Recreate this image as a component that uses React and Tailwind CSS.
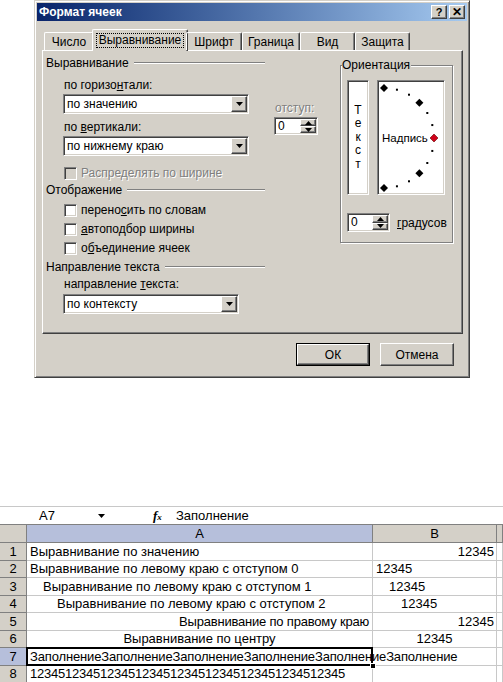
import React from 'react';

const raised =
  'border border-t-white border-l-white border-r-[#404040] border-b-[#404040] shadow-[inset_-1px_-1px_0_#808080] bg-[#d4d0c8]';
const sunken =
  'border border-t-[#808080] border-l-[#808080] border-r-white border-b-white shadow-[inset_1px_1px_0_#404040,inset_-1px_-1px_0_#d4d0c8]';
const dim = 'text-[#808080] [text-shadow:1px_1px_0_#fff]';

function Tri({ up }) {
  return (
    <svg width="7" height="4" viewBox="0 0 7 4">
      <path d={up ? 'M3.5 0L7 4H0z' : 'M0 0h7L3.5 4z'} fill="#000" />
    </svg>
  );
}

function Combo({ value, className }) {
  return (
    <div className={`${sunken} bg-white h-[20px] p-[1px] flex items-center ${className}`}>
      <span className="flex-1 pl-[2px] leading-[16px]">{value}</span>
      <div className={`${raised} w-[16px] h-[16px] flex items-center justify-center`}>
        <Tri />
      </div>
    </div>
  );
}

function Spin({ className }) {
  return (
    <div className={`${sunken} bg-white p-[1px] flex items-stretch ${className}`}>
      <span className="flex-1 pl-[2px] leading-[15px]">0</span>
      <div className="flex flex-col w-[16px]">
        <div className={`${raised} flex-1 flex items-center justify-center`}>
          <Tri up />
        </div>
        <div className={`${raised} flex-1 flex items-center justify-center`}>
          <Tri />
        </div>
      </div>
    </div>
  );
}

function Check({ children, disabled, className = '' }) {
  return (
    <div className={`flex items-center h-[14px] pl-[18px] ${className}`}>
      <div className={`${sunken} w-[13px] h-[13px] ${disabled ? 'bg-[#d4d0c8]' : 'bg-white'}`} />
      <span className={`ml-[4px] leading-[14px] ${disabled ? dim : ''}`}>{children}</span>
    </div>
  );
}

function Header({ children, className = '' }) {
  return (
    <div className={`flex items-center h-[14px] w-[219px] ${className}`}>
      <span className="leading-[14px]">{children}</span>
      <div className="flex-1 ml-[5px] h-[2px] border-t border-t-[#808080] border-b border-b-white" />
    </div>
  );
}

function Tab({ children, className = '' }) {
  return (
    <div
      className={`h-[18px] flex items-center justify-center border-l border-t border-l-white border-t-white border-r border-r-[#404040] shadow-[inset_-1px_0_0_#808080] rounded-t-[2px] ${className}`}
    >
      {children}
    </div>
  );
}

function Dial() {
  const cx = 5;
  const cy = 56;
  const r = 50;
  const pts = [];
  for (let a = -90; a <= 90; a += 15) {
    const t = (a * Math.PI) / 180;
    pts.push({ a, x: cx + r * Math.cos(t), y: cy + r * Math.sin(t) });
  }
  return (
    <svg width="64" height="111" viewBox="0 0 64 111">
      {pts.map((p) => {
        if (p.a === 0) {
          return (
            <path
              key={p.a}
              d={`M${p.x} ${p.y - 4}L${p.x + 4} ${p.y}L${p.x} ${p.y + 4}L${p.x - 4} ${p.y}z`}
              fill="#d0021b"
              stroke="#600"
              strokeWidth="0.6"
            />
          );
        }
        if (p.a % 45 === 0) {
          return (
            <path
              key={p.a}
              d={`M${p.x} ${p.y - 4}L${p.x + 4} ${p.y}L${p.x} ${p.y + 4}L${p.x - 4} ${p.y}z`}
              fill="#000"
            />
          );
        }
        return <rect key={p.a} x={p.x - 1} y={p.y - 1} width="2" height="2" fill="#000" />;
      })}
      <text x="3" y="60" fontSize="11.5" fontFamily="Liberation Sans, Arial, sans-serif" fill="#000">
        Надпись
      </text>
    </svg>
  );
}

function Dialog() {
  return (
    <div className="ml-[34px] w-[436px] h-[378px] bg-[#d4d0c8] border border-t-[#d4d0c8] border-l-[#d4d0c8] border-r-[#404040] border-b-[#404040] shadow-[inset_1px_1px_0_#fff,inset_-1px_-1px_0_#808080] p-[2px] text-[12px] text-black">
      <div className="h-[18px] flex items-center bg-gradient-to-r from-[#0a246a] to-[#a6caf0] pl-[2px] pr-[2px]">
        <span className="flex-1 font-bold text-white leading-[18px]">Формат ячеек</span>
        <div className={`${raised} w-[16px] h-[14px] flex items-center justify-center text-[11px] font-bold leading-none`}>?</div>
        <div className={`${raised} ml-[2px] w-[16px] h-[14px] flex items-center justify-center text-[12px] font-bold leading-none`}>✕</div>
      </div>

      <div className="mt-[8px] ml-[7px] h-[21px] flex items-end relative z-10">
        <Tab className="w-[50px]">Число</Tab>
        <div className="-mx-[2px] -mb-[1px] w-[96px] h-[22px] bg-[#d4d0c8] flex items-start justify-center pt-[3px] border-l border-t border-l-white border-t-white border-r border-r-[#404040] shadow-[inset_-1px_0_0_#808080] rounded-t-[2px]">
          <span className="border border-dotted border-black px-[2px] leading-[13px]">Выравнивание</span>
        </div>
        <Tab className="w-[56px]">Шрифт</Tab>
        <Tab className="w-[58px]">Граница</Tab>
        <Tab className="w-[55px]">Вид</Tab>
        <Tab className="w-[55px]">Защита</Tab>
      </div>

      <div className="ml-[5px] w-[421px] h-[284px] border border-t-white border-l-white border-r-[#404040] border-b-[#404040] shadow-[inset_-1px_-1px_0_#808080] flex">
        <div className="w-[297px] pl-[3px] pt-[5px]">
          <Header>Выравнивание</Header>
          <div className="flex mt-[8px]">
            <div className="pl-[17px]">
              <div className="h-[14px] leading-[14px] pl-[1px]">
                по горизо<u>н</u>тали:
              </div>
              <Combo className="mt-[2px] w-[186px]" value="по значению" />
              <div className="mt-[6px] h-[14px] leading-[14px] pl-[1px]">
                по <u>в</u>ертикали:
              </div>
              <Combo className="mt-[2px] w-[186px]" value="по нижнему краю" />
            </div>
            <div className="ml-[25px] pt-[23px]">
              <div className={`h-[14px] leading-[14px] pl-[1px] ${dim}`}>отступ:</div>
              <Spin className="mt-[2px] w-[44px] h-[18px]" />
            </div>
          </div>
          <Check disabled className="mt-[10px]">
            Распределять по ширине
          </Check>
          <Header className="mt-[3px]">Отображение</Header>
          <Check className="mt-[6px]">
            перено<u>с</u>ить по словам
          </Check>
          <Check className="mt-[5px]">
            <u>а</u>втоподбор ширины
          </Check>
          <Check className="mt-[5px]">
            о<u>б</u>ъединение ячеек
          </Check>
          <Header className="mt-[5px]">Направление текста</Header>
          <div className="mt-[3px] h-[14px] leading-[14px] pl-[18px]">
            направление <u>т</u>екста:
          </div>
          <Combo className="mt-[3px] ml-[17px] w-[176px]" value="по контексту" />
        </div>

        <div className="mt-[14px] w-[113px] h-[178px] border border-[#808080] shadow-[inset_1px_1px_0_#fff,1px_1px_0_#fff]">
          <div className="-mt-[8px] ml-[1px] w-fit bg-[#d4d0c8] h-[14px] leading-[14px] pr-[1px]">Ориентация</div>
          <div className="flex mt-[8px] ml-[6px]">
            <div className={`${sunken} bg-white w-[22px] h-[115px] flex flex-col items-center justify-center leading-[13.5px]`}>
              <span>Т</span>
              <span>е</span>
              <span>к</span>
              <span>с</span>
              <span>т</span>
            </div>
            <div className={`${sunken} bg-white ml-[8px] w-[68px] h-[115px] p-[1px]`}>
              <Dial />
            </div>
          </div>
          <div className="flex items-center mt-[18px] ml-[6px]">
            <Spin className="w-[43px] h-[19px]" />
            <span className="ml-[7px]">
              <u>г</u>радусов
            </span>
          </div>
        </div>
      </div>

      <div className="mt-[9px] flex justify-end gap-[10px] pr-[13px]">
        <div className="w-[74px] h-[23px] border border-black">
          <div className={`${raised} w-full h-full flex items-center justify-center`}>ОК</div>
        </div>
        <div className={`${raised} w-[74px] h-[23px] flex items-center justify-center`}>Отмена</div>
      </div>
    </div>
  );
}

const rows = [
  { n: 1, a: 'Выравнивание по значению', ac: 'justify-start pl-[3px]', b: '12345', bc: 'justify-end pr-[2px]' },
  { n: 2, a: 'Выравнивание по левому краю с отступом 0', ac: 'justify-start pl-[3px]', b: '12345', bc: 'justify-start pl-[3px]' },
  { n: 3, a: 'Выравнивание по левому краю с отступом 1', ac: 'justify-start pl-[16px]', b: '12345', bc: 'justify-start pl-[16px]' },
  { n: 4, a: 'Выравнивание по левому краю с отступом 2', ac: 'justify-start pl-[30px]', b: '12345', bc: 'justify-start pl-[28px]' },
  { n: 5, a: 'Выравнивание по правому краю', ac: 'justify-end pr-[3px] tracking-[-0.2px]', b: '12345', bc: 'justify-end pr-[2px]' },
  { n: 6, a: 'Выравнивание по центру', ac: 'justify-center', b: '12345', bc: 'justify-center' },
];

function Sheet() {
  const cell = 'h-[17.5px] border-r border-b border-[#c8c8c8] flex items-center whitespace-nowrap overflow-hidden';
  const head = 'border-r border-b border-[#808080] flex items-center justify-center';
  return (
    <div className="mt-[128px] text-[13px] text-black">
      <div className="h-[18px] border-t border-[#c8c8c8] flex items-center">
        <span className="w-[94px] text-center leading-[17px]">A7</span>
        <span className="ml-[4px]">
          <Tri />
        </span>
        <span className="ml-[48px] w-[12px] italic font-bold font-['Liberation_Serif',serif] text-[13px] leading-none">
          f<span className="text-[9px]">x</span>
        </span>
        <span className="ml-[11px] leading-[17px]">Заполнение</span>
      </div>
      <div className="grid grid-cols-[27px_346px_124px_1fr]">
        <div className={`${head} h-[19px] bg-[#d4d0c8] border-t border-t-[#808080]`} />
        <div className={`${head} h-[19px] bg-[#b6bfdb] border-t border-t-[#808080]`}>A</div>
        <div className={`${head} h-[19px] bg-[#d4d0c8] border-t border-t-[#808080]`}>B</div>
        <div className={`${head} h-[19px] bg-[#d4d0c8] border-t border-t-[#808080]`} />
        {rows.map((r) => (
          <React.Fragment key={r.n}>
            <div className={`${head} h-[17.5px] bg-[#d4d0c8]`}>{r.n}</div>
            <div className={`${cell} ${r.ac}`}>{r.a}</div>
            <div className={`${cell} ${r.bc}`}>{r.b}</div>
            <div className={cell} />
          </React.Fragment>
        ))}
        <div className={`${head} h-[17.5px] bg-[#b6bfdb]`}>7</div>
        <div className={`${cell} relative overflow-visible pl-[3px] z-10`}>
          <span className="tracking-[-0.15px]">ЗаполнениеЗаполнениеЗаполнениеЗаполнениеЗаполнениеЗаполнение</span>
          <div className="absolute -left-[1px] -top-[1px] -right-[1px] -bottom-[1px] border-2 border-black" />
          <div className="absolute -right-[4px] -bottom-[4px] w-[6px] h-[6px] bg-black border border-white" />
        </div>
        <div className={cell} />
        <div className={cell} />
        <div className={`${head} h-[17.5px] bg-[#d4d0c8]`}>8</div>
        <div className={`${cell} pl-[3px] tracking-[-0.23px]`}>123451234512345123451234512345123451234512345</div>
        <div className={cell} />
        <div className={cell} />
      </div>
    </div>
  );
}

export default function App() {
  return (
    <div className="w-[503px] h-[682px] bg-white overflow-hidden font-['Liberation_Sans',Arial,sans-serif]">
      <Dialog />
      <Sheet />
    </div>
  );
}
